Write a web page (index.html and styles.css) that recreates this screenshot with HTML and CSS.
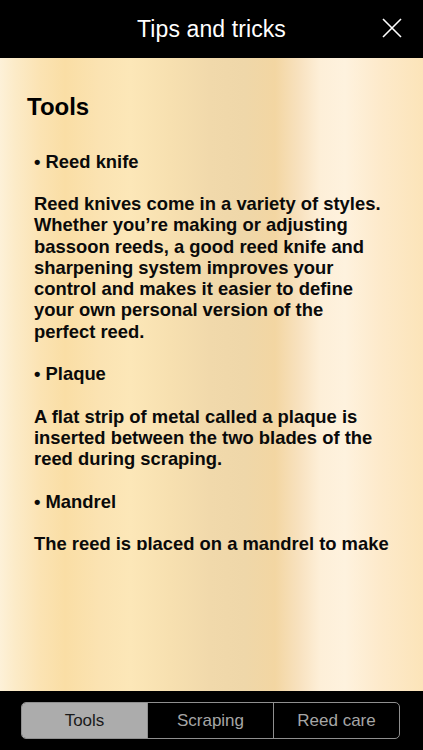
FILE: index.html
```html
<!DOCTYPE html>
<html lang="en">
<head>
<meta charset="utf-8">
<title>Tips and tricks</title>
<link rel="stylesheet" href="styles.css">
</head>
<body>
<div class="app">
  <header class="topbar">
    <h1 class="title">Tips and tricks</h1>
    <button class="close" aria-label="Close">
      <svg width="20" height="20" viewBox="0 0 20 20"><path d="M1 1 L19 19 M19 1 L1 19" stroke="#fff" stroke-width="1.6" fill="none"/></svg>
    </button>
  </header>
  <main class="content">
    <h2 class="heading">Tools</h2>
    <div class="textbox">
      <p class="item">• Reed knife</p>
      <p class="para">Reed knives come in a variety of styles. Whether you’re making or adjusting bassoon reeds, a good reed knife and sharpening system improves your control and makes it easier to define your own personal version of the <span class="nowrap">perfect reed.</span></p>
      <p class="item">• Plaque</p>
      <p class="para">A flat strip of metal called a plaque is inserted between the two blades of the reed during scraping.</p>
      <p class="item">• Mandrel</p>
      <p class="para">The reed is placed on a mandrel to make scraping easier and to help keep the tube round while you work on the blades.</p>
    </div>
  </main>
  <footer class="bottombar">
    <div class="segmented">
      <div class="seg seg-active">Tools</div>
      <div class="seg">Scraping</div>
      <div class="seg">Reed care</div>
    </div>
  </footer>
</div>
</body>
</html>
```
FILE: styles.css
```css
* { box-sizing: border-box; }
html, body { margin: 0; padding: 0; }
body {
  font-family: "Liberation Sans", Arial, Helvetica, sans-serif;
  background: #000;
}
.app {
  width: 423px;
  height: 750px;
  display: flex;
  flex-direction: column;
  overflow: hidden;
}
.topbar {
  height: 58px;
  flex: 0 0 58px;
  background: #000;
  display: flex;
  align-items: center;
  justify-content: center;
  position: relative;
}
.title {
  margin: 0;
  color: #fff;
  font-size: 23px;
  font-weight: normal;
  letter-spacing: 0.1px;
}
.close {
  position: absolute;
  right: 21px;
  top: 18px;
  width: 20px;
  height: 20px;
  padding: 0;
  border: 0;
  background: transparent;
  display: block;
}
.close svg { display: block; }
.content {
  flex: 1 1 auto;
  background: linear-gradient(90deg,
    #fdf1d8 0px, #fcebc8 15px, #fbe3b3 40px, #fadea5 65px, #fbe3b2 100px,
    #fce7b8 130px, #f7e0b0 170px, #f1d9ab 210px, #efd7a9 245px, #f3d6a2 275px,
    #f8e2c0 300px, #fdefd8 320px, #fef2de 345px, #fdeacb 380px, #fce4b9 423px);
  padding: 34px 0 0 27px;
  display: flex;
  flex-direction: column;
}
.heading {
  margin: 0;
  font-size: 24px;
  line-height: 30px;
  font-weight: bold;
  color: #000;
}
.textbox {
  margin-top: 28.5px;
  height: 399.5px;
  overflow: hidden;
  padding-left: 7px;
  width: 368px;
  font-size: 18.4px;
  line-height: 21.25px;
  font-weight: bold;
  color: #0a0a0a;
}
.textbox p { margin: 0 0 21.25px 0; }
.nowrap { white-space: nowrap; }
.bottombar {
  height: 59px;
  flex: 0 0 59px;
  background: #000;
  padding: 11px 0 0 21px;
}
.segmented {
  width: 379px;
  height: 37px;
  border: 1px solid #8f8f8f;
  border-radius: 5px;
  display: flex;
  overflow: hidden;
}
.seg {
  flex: 1 1 0;
  display: flex;
  align-items: center;
  justify-content: center;
  color: #a6a6a6;
  font-size: 17px;
  border-left: 1px solid #8f8f8f;
}
.seg:first-child { border-left: 0; }
.seg-active {
  background: #acacac;
  color: #1a1a1a;
}
```
